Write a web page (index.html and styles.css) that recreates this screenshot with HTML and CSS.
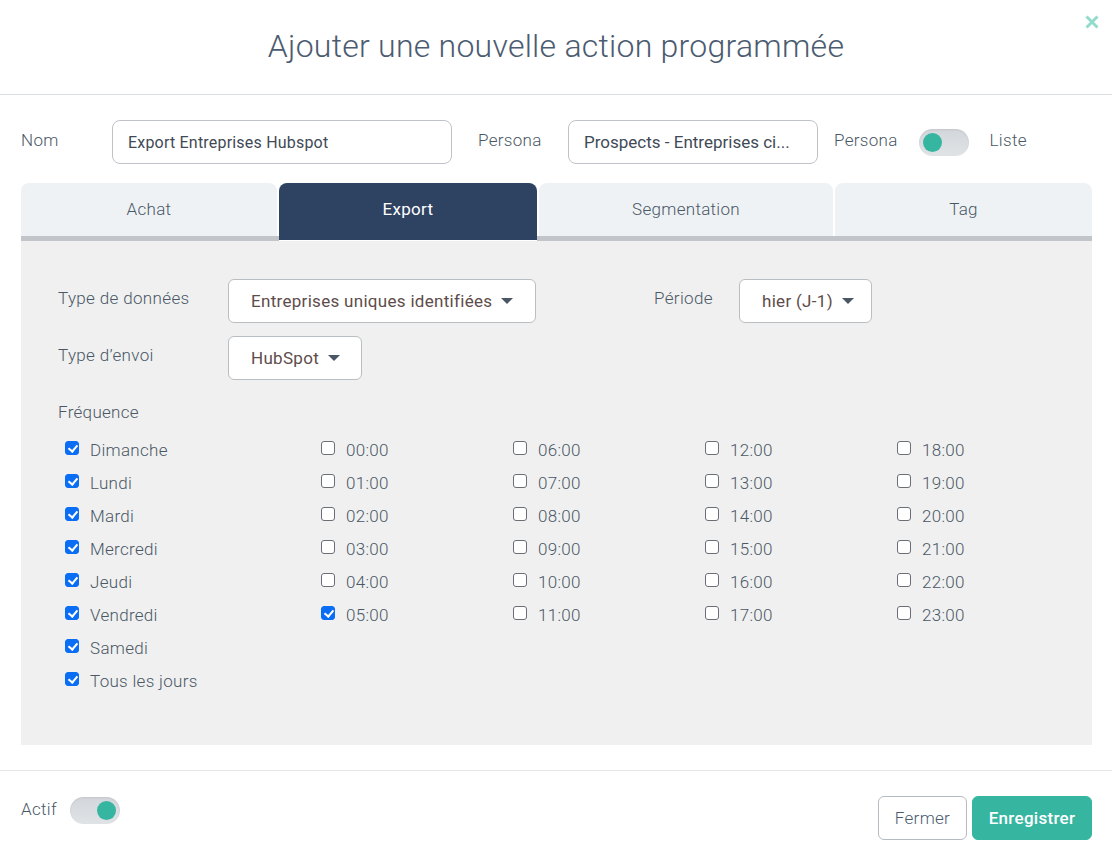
FILE: index.html
```html
<!DOCTYPE html>
<html lang="fr">
<head>
<meta charset="utf-8">
<title>Ajouter une nouvelle action programmée</title>
<link rel="stylesheet" href="styles.css">
</head>
<body>
<div class="modal">
  <header class="modal-header">
    <h1 class="title">Ajouter une nouvelle action programmée</h1>
    <button class="close" aria-label="Fermer">
      <svg width="16" height="16" viewBox="0 0 16 16"><path d="M2.5 2.5 L13.5 13.5 M13.5 2.5 L2.5 13.5" stroke="#93dccd" stroke-width="3" stroke-linecap="butt"/></svg>
    </button>
  </header>

  <div class="modal-body">
    <div class="form-row">
      <label class="lbl lbl-nom">Nom</label>
      <div class="input input-nom">Export Entreprises Hubspot</div>
      <label class="lbl lbl-persona">Persona</label>
      <div class="input input-persona">Prospects - Entreprises ci...</div>
      <span class="lbl lbl-p2">Persona</span>
      <span class="toggle toggle-left"><span class="knob"></span></span>
      <span class="lbl lbl-liste">Liste</span>
    </div>

    <div class="tabs">
      <div class="tab">Achat</div>
      <div class="tab active">Export</div>
      <div class="tab">Segmentation</div>
      <div class="tab">Tag</div>
    </div>

    <div class="panel">
      <div class="field-grid">
        <div class="flabel">Type de données</div>
        <div class="select sel-type">Entreprises uniques identifiées <span class="caret"></span></div>
        <div class="flabel flabel-periode">Période</div>
        <div class="select sel-periode">hier (J-1) <span class="caret"></span></div>
      </div>
      <div class="field-grid second">
        <div class="flabel">Type d’envoi</div>
        <div class="select sel-envoi">HubSpot <span class="caret"></span></div>
      </div>

      <div class="freq-label">Fréquence</div>
      <div class="freq">
        <div class="col col-days">
          <div class="cb"><span class="box on"></span>Dimanche</div>
          <div class="cb"><span class="box on"></span>Lundi</div>
          <div class="cb"><span class="box on"></span>Mardi</div>
          <div class="cb"><span class="box on"></span>Mercredi</div>
          <div class="cb"><span class="box on"></span>Jeudi</div>
          <div class="cb"><span class="box on"></span>Vendredi</div>
          <div class="cb"><span class="box on"></span>Samedi</div>
          <div class="cb"><span class="box on"></span>Tous les jours</div>
        </div>
        <div class="col col-h">
          <div class="cb"><span class="box"></span>00:00</div>
          <div class="cb"><span class="box"></span>01:00</div>
          <div class="cb"><span class="box"></span>02:00</div>
          <div class="cb"><span class="box"></span>03:00</div>
          <div class="cb"><span class="box"></span>04:00</div>
          <div class="cb"><span class="box on"></span>05:00</div>
        </div>
        <div class="col col-h">
          <div class="cb"><span class="box"></span>06:00</div>
          <div class="cb"><span class="box"></span>07:00</div>
          <div class="cb"><span class="box"></span>08:00</div>
          <div class="cb"><span class="box"></span>09:00</div>
          <div class="cb"><span class="box"></span>10:00</div>
          <div class="cb"><span class="box"></span>11:00</div>
        </div>
        <div class="col col-h">
          <div class="cb"><span class="box"></span>12:00</div>
          <div class="cb"><span class="box"></span>13:00</div>
          <div class="cb"><span class="box"></span>14:00</div>
          <div class="cb"><span class="box"></span>15:00</div>
          <div class="cb"><span class="box"></span>16:00</div>
          <div class="cb"><span class="box"></span>17:00</div>
        </div>
        <div class="col col-h col-last">
          <div class="cb"><span class="box"></span>18:00</div>
          <div class="cb"><span class="box"></span>19:00</div>
          <div class="cb"><span class="box"></span>20:00</div>
          <div class="cb"><span class="box"></span>21:00</div>
          <div class="cb"><span class="box"></span>22:00</div>
          <div class="cb"><span class="box"></span>23:00</div>
        </div>
      </div>
    </div>
  </div>

  <footer class="modal-footer">
    <div class="actif">
      <span class="lbl">Actif</span>
      <span class="toggle toggle-right"><span class="knob"></span></span>
    </div>
    <div class="buttons">
      <button class="btn btn-close">Fermer</button>
      <button class="btn btn-save">Enregistrer</button>
    </div>
  </footer>
</div>
</body>
</html>
```

FILE: styles.css
```css
* { box-sizing: border-box; }
html, body { margin: 0; padding: 0; background: #fff; }
body {
  font-family: Roboto, "Noto Sans", "Liberation Sans", sans-serif;
  color: #4a5866;
  width: 1112px;
  height: 862px;
  overflow: hidden;
}
.modal { width: 1112px; }

.modal-header {
  position: relative;
  height: 95px;
  border-bottom: 1px solid #d9dee3;
  display: flex;
  align-items: center;
  justify-content: center;
}
.title {
  margin: 0;
  padding-bottom: 3px;
  font-weight: 300;
  font-size: 32px;
  color: #4b5b70;
  letter-spacing: 0.25px;
}
.close {
  position: absolute;
  right: 12px;
  top: 14px;
  border: 0;
  background: none;
  padding: 0;
  width: 16px;
  height: 16px;
}

.modal-body { padding: 25px 20px 25px 21px; }

.form-row {
  display: flex;
  align-items: center;
  height: 44px;
  font-size: 17px;
}
.lbl { font-size: 17px; color: #4a5866; font-weight: 300; letter-spacing: 0.3px; }
.lbl-nom { width: 91px; padding-bottom: 4px; }
.input {
  height: 44px;
  border: 1px solid #bfc3c7;
  border-radius: 8px;
  padding: 0 15px;
  display: flex;
  align-items: center;
  font-size: 16px;
  color: #3f4a56;
  white-space: nowrap;
  overflow: hidden;
  letter-spacing: 0.2px;
}
.input-nom { width: 340px; }
.lbl-persona { margin-left: 26px; width: 90px; padding-bottom: 4px; }
.input-persona { width: 250px; font-size: 17px; letter-spacing: 0; }
.lbl-p2 { margin-left: 16px; padding-bottom: 4px; }
.toggle {
  display: inline-flex;
  align-items: center;
  width: 50px;
  height: 27px;
  border-radius: 14px;
  background: linear-gradient(#d3d6da, #e0e3e6);
  box-shadow: inset 0 1px 2px rgba(0,0,0,0.08);
  padding: 0 4px;
  flex: none;
}
.toggle .knob {
  width: 19px; height: 19px; border-radius: 50%;
  background: #36b5a0;
}
.toggle-left { margin-left: 21px; }
.toggle-right { justify-content: flex-end; margin-left: 13px; }
.lbl-liste { margin-left: 21px; padding-bottom: 4px; }

.tabs {
  margin-top: 19px;
  display: grid;
  grid-template-columns: 256px 258px 294px 257px;
  column-gap: 2px;
  width: 1071px;
  border-bottom: 5px solid #c1c5ca;
}
.tab {
  height: 53px;
  background: #eef2f5;
  border-radius: 8px 8px 0 0;
  display: flex;
  align-items: center;
  justify-content: center;
  font-size: 17px;
  font-weight: 300;
  color: #4a5866;
  padding-bottom: 2px;
  letter-spacing: 0.3px;
}
.tab.active {
  background: #2e4262;
  color: #fff;
  font-weight: 400;
  border-bottom: 1px solid #fff;
  margin-bottom: -5px;
  height: 58px;
  box-shadow: inset 0 -4px 0 #2e4262;
  padding-bottom: 5px;
}

.panel {
  width: 1071px;
  height: 504px;
  background: #f0f0f0;
  padding: 38px 37px 0 37px;
  overflow: hidden;
}
.field-grid {
  display: flex;
  align-items: center;
}
.field-grid.second { margin-top: 13px; }
.flabel {
  width: 170px;
  flex: none;
  font-size: 17px;
  font-weight: 300;
  color: #4a5866;
  padding-bottom: 6px;
  letter-spacing: 0.35px;
}
.select {
  height: 44px;
  background: #fff;
  border: 1px solid #b9bec3;
  border-radius: 6px;
  display: flex;
  align-items: center;
  padding: 0 14px 0 22px;
  font-size: 17px;
  color: #5e4c4a;
  white-space: nowrap;
  letter-spacing: 0.3px;
  flex: none;
}
.caret {
  display: inline-block;
  width: 0; height: 0;
  border-left: 6px solid transparent;
  border-right: 6px solid transparent;
  border-top: 6px solid #4a5566;
  margin-left: 9px;
}
.sel-type { width: 308px; }
.flabel-periode { margin-left: 118px; width: 85px; }
.sel-periode { width: 133px; }
.sel-envoi { width: 134px; }

.freq-label {
  margin-top: 22px;
  font-size: 17px;
  font-weight: 300;
  color: #4a5866;
  letter-spacing: 0.3px;
}
.freq {
  display: flex;
  margin-top: 11px;
}
.col { display: flex; flex-direction: column; flex: none; }
.col-days { width: 263px; padding-left: 7px; }
.col-h { width: 192px; }
.col-last { width: 120px; }
.cb {
  height: 33px;
  display: flex;
  align-items: center;
  font-size: 17px;
  font-weight: 300;
  color: #4a5866;
  letter-spacing: 0.3px;
}
.box {
  width: 14px; height: 14px;
  border: 1px solid #6b6f73;
  border-radius: 3px;
  background: #fff;
  margin-right: 11px;
  margin-top: -4px;
  position: relative;
  flex: none;
}
.box.on {
  background: #0a6ef5;
  border-color: #0a6ef5;
}
.box.on::after {
  content: "";
  position: absolute;
  left: 4px; top: 1px;
  width: 4px; height: 7px;
  border: solid #fff;
  border-width: 0 2px 2px 0;
  transform: rotate(40deg);
}

.modal-footer {
  border-top: 1px solid #e3e5e8;
  height: 92px;
  display: flex;
  justify-content: space-between;
  align-items: flex-start;
  padding: 25px 20px 0 21px;
}
.actif { display: flex; align-items: center; height: 28px; }
.actif .lbl { padding-bottom: 2px; }
.buttons { display: flex; gap: 5px; }
.btn {
  height: 44px;
  border-radius: 6px;
  font-family: inherit;
  font-size: 17px;
  padding: 0 12px;
  cursor: pointer;
  letter-spacing: 0.3px;
}
.btn-close {
  width: 89px;
  background: #fff;
  border: 1px solid #b5bbc1;
  color: #4b5b70;
  font-weight: 300;
}
.btn-save {
  width: 120px;
  background: #36b5a0;
  border: 1px solid #36b5a0;
  color: #fff;
  font-weight: 500;
}
```
